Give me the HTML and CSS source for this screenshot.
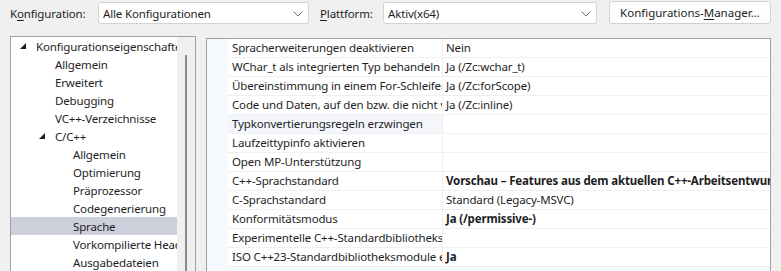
FILE: index.html
```html
<!DOCTYPE html>
<html lang="de">
<head>
  <meta charset="UTF-8" />
  <title>Eigenschaftenseiten</title>
  <link rel="stylesheet" href="styles.css">
</head>
<body>

  <div class="toolbar">
    <label class="field-label">K<u>o</u>nfiguration:</label>
    <div class="combo combo-config">
      <span>Alle Konfigurationen</span>
      <svg class="chevron" width="10" height="6" viewBox="0 0 10 6"><polyline points="0.5,0.5 5,5 9.5,0.5" fill="none" stroke="#6d6d6d" stroke-width="1"/></svg>
    </div>
    <label class="field-label platform-label"><u>P</u>lattform:</label>
    <div class="combo combo-platform">
      <span>Aktiv(x64)</span>
      <svg class="chevron" width="10" height="6" viewBox="0 0 10 6"><polyline points="0.5,0.5 5,5 9.5,0.5" fill="none" stroke="#6d6d6d" stroke-width="1"/></svg>
    </div>
    <button class="manager-btn">Konfigurations-<u>M</u>anager...</button>
  </div>

  <div class="content">
    <div class="tree">
      <div class="tree-list" id="treeList"></div>
      <div class="tree-scroll"><div class="thumb"></div></div>
    </div>

    <div class="grid">
      <div class="gutter"></div>
      <div class="rows" id="gridRows"></div>
    </div>
  </div>

  <script>
    const treeItems = [
      { text: 'Konfigurationseigenschaften', level: 0, open: true },
      { text: 'Allgemein', level: 1 },
      { text: 'Erweitert', level: 1 },
      { text: 'Debugging', level: 1 },
      { text: 'VC++-Verzeichnisse', level: 1 },
      { text: 'C/C++', level: 1, open: true },
      { text: 'Allgemein', level: 2 },
      { text: 'Optimierung', level: 2 },
      { text: 'Präprozessor', level: 2 },
      { text: 'Codegenerierung', level: 2 },
      { text: 'Sprache', level: 2, selected: true },
      { text: 'Vorkompilierte Header', level: 2 },
      { text: 'Ausgabedateien', level: 2 }
    ];

    const props = [
      { name: 'Spracherweiterungen deaktivieren', value: 'Nein' },
      { name: 'WChar_t als integrierten Typ behandeln', value: 'Ja (/Zc:wchar_t)' },
      { name: 'Übereinstimmung in einem For-Schleifenbereich erzwingen', value: 'Ja (/Zc:forScope)' },
      { name: 'Code und Daten, auf den bzw. die nicht verwiesen wird, entfernen', value: 'Ja (/Zc:inline)' },
      { name: 'Typkonvertierungsregeln erzwingen', value: '', hover: true },
      { name: 'Laufzeittypinfo aktivieren', value: '' },
      { name: 'Open MP-Unterstützung', value: '' },
      { name: 'C++-Sprachstandard', value: 'Vorschau – Features aus dem aktuellen C++-Arbeitsentwurf (/std:c++latest)', bold: true },
      { name: 'C-Sprachstandard', value: 'Standard (Legacy-MSVC)' },
      { name: 'Konformitätsmodus', value: 'Ja (/permissive-)', bold: true },
      { name: 'Experimentelle C++-Standardbibliotheksmodule aktivieren', value: '' },
      { name: 'ISO C++23-Standardbibliotheksmodule erstellen', value: 'Ja', bold: true }
    ];

    const arrow = '<svg width="6" height="6" viewBox="0 0 6 6"><polygon points="6,0 6,6 0,6" fill="#1e1e1e"/></svg>';

    const treeList = document.getElementById('treeList');
    treeItems.forEach(item => {
      treeList.innerHTML += `
        <div class="tree-item level-${item.level}${item.selected ? ' selected' : ''}">
          <span class="expander">${item.open ? arrow : ''}</span>
          <span class="tree-text">${item.text}</span>
        </div>
      `;
    });

    const gridRows = document.getElementById('gridRows');
    props.forEach(p => {
      gridRows.innerHTML += `
        <div class="row">
          <div class="cell name${p.hover ? ' hover' : ''}">${p.name}</div>
          <div class="cell value${p.bold ? ' bold' : ''}">${p.value}</div>
        </div>
      `;
    });
  </script>
</body>
</html>
```

FILE: styles.css
```css
* { margin: 0; padding: 0; box-sizing: border-box; }
body {
  background: #f0f0f0;
  font-family: 'Noto Sans', 'Open Sans', sans-serif;
  font-size: 11.5px;
  letter-spacing: -0.15px;
  color: #1e1e1e;
  height: 271px;
  overflow: hidden;
}

u { text-decoration-thickness: 1px; text-underline-offset: 2px; }

/* top bar */
.toolbar {
  display: flex;
  align-items: center;
  height: 27px;
  padding-left: 10px;
}

.field-label { width: 88px; flex-shrink: 0; }
.platform-label { width: 63px; margin-left: 11px; }

.combo {
  height: 22px;
  background: #fff;
  border: 1px solid #d3d3d3;
  border-radius: 3px;
  display: flex;
  align-items: center;
  justify-content: space-between;
  padding: 0 5px 0 4px;
  margin-top: -1px;
  flex-shrink: 0;
}
.combo-config { width: 211px; }
.combo-platform { width: 214px; }
.chevron { display: block; margin-top: 1px; }

.manager-btn {
  margin-left: 12px;
  width: 162px;
  height: 23px;
  margin-top: -3px;
  background: #fdfdfd;
  border: 1px solid #d0d0d0;
  border-radius: 3px;
  font: inherit;
  color: inherit;
  flex-shrink: 0;
}

/* content area */
.content {
  display: flex;
  align-items: flex-start;
  padding-left: 10px;
  margin-top: 9px;
}

.tree {
  width: 186px;
  height: 250px;
  border: 1px solid #a0a0a0;
  border-bottom: none;
  display: flex;
  flex-shrink: 0;
}

.tree-list {
  width: 166px;
  background: #fff;
  overflow: hidden;
}

.tree-item {
  height: 18px;
  display: flex;
  align-items: center;
  white-space: nowrap;
}
.tree-item.selected { background: #cdcfdb; }

.expander {
  width: 19px;
  flex-shrink: 0;
  display: flex;
  align-items: center;
  padding-left: 3px;
}
.level-0 { padding-left: 6px; }
.level-1 { padding-left: 25px; }
.level-2 { padding-left: 43px; }

.tree-scroll {
  flex: 1;
  background: #f0f0f0;
  display: flex;
  justify-content: center;
}
.thumb {
  width: 2px;
  height: 100%;
  margin-top: 18px;
  background: #8a8a8a;
}

.grid {
  width: 565px;
  height: 250px;
  margin-left: 10px;
  margin-top: 2px;
  border: 1px solid #a0a0a0;
  border-bottom: none;
  background: #f5f8fc;
  display: flex;
  flex-shrink: 0;
}

.gutter { width: 21px; flex-shrink: 0; }

.rows {
  flex: 1;
  min-width: 0;
  overflow: hidden;
  background: #fff;
  align-self: flex-start;
}

.row {
  display: flex;
  height: 19px;
  border-bottom: 1px solid #f0f0f0;
}

.cell {
  white-space: nowrap;
  overflow: hidden;
  line-height: 18px;
}
.cell.name {
  width: 215px;
  flex-shrink: 0;
  padding-left: 4px;
  border-right: 1px solid #f0f0f0;
}
.cell.name.hover { background: #f3f6fb; }
.cell.value { flex: 1; min-width: 0; padding-left: 3px; }
.cell.bold { font-weight: bold; }
```
